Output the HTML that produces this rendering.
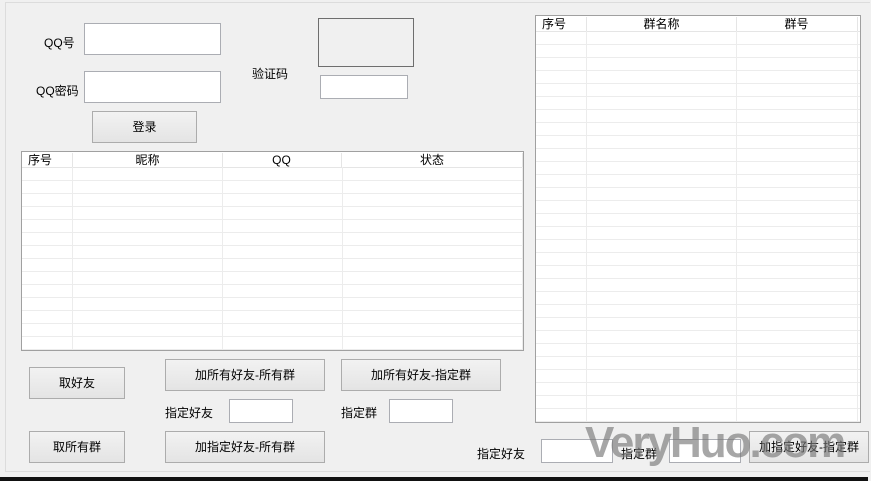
<!DOCTYPE html><html><head><meta charset="utf-8"><style>
body{margin:0;width:871px;height:481px;background:#f0f0f0;position:relative;overflow:hidden;font-family:"Liberation Sans","Noto Sans CJK SC",sans-serif;font-size:12px;color:#000}
.a{position:absolute}
.in{position:absolute;background:#fff;border:1px solid #abadb3;box-sizing:border-box}
.bt{position:absolute;background:linear-gradient(#f2f2f2,#e4e4e4);border:1px solid #acacac;box-sizing:border-box;text-align:center;font-size:12px}
.tb{position:absolute;background:#fff;border:1px solid #a0a0a0;box-sizing:border-box;overflow:hidden;
background-image:linear-gradient(#ececec 1px,transparent 1px);background-size:100% 13px;background-position:0 15px}
.hd{position:absolute;top:0;left:0;right:0;height:15px;background:#fff;border-bottom:1px solid #e5e5e5}
.hc{position:absolute;top:1px;height:15px;line-height:15px;text-align:center;border-right:1px solid #e5e5e5}
.vl{position:absolute;top:15px;bottom:0;width:1px;background:#ececec}
</style></head><body>
<div class="a" style="left:5px;top:2px;width:864px;height:468px;border:1px solid #dcdcdc;border-right:none"></div>
<div class="a" style="left:44px;top:34px">QQ号</div>
<div class="in" style="left:84px;top:23px;width:137px;height:32px"></div>
<div class="a" style="left:36px;top:82px">QQ密码</div>
<div class="in" style="left:84px;top:71px;width:137px;height:32px"></div>
<div class="bt" style="left:92px;top:111px;width:105px;height:32px;line-height:31px">登录</div>
<div class="a" style="left:252px;top:65px">验证码</div>
<div class="a" style="left:318px;top:18px;width:94px;height:47px;border:1px solid #6e6e6e"></div>
<div class="in" style="left:320px;top:75px;width:88px;height:24px"></div>

<div class="tb" style="left:21px;top:151px;width:503px;height:200px">
<div class="hd"><div class="hc" style="left:0;width:49px;text-align:left;padding-left:6px;border-right:none">序号</div>
<div class="hc" style="left:50px;width:149px;border-left:1px solid #e5e5e5">昵称</div>
<div class="hc" style="left:200px;width:119px">QQ</div>
<div class="hc" style="left:320px;width:180px">状态</div></div>
<div class="vl" style="left:50px"></div><div class="vl" style="left:200px"></div><div class="vl" style="left:320px"></div><div class="vl" style="left:500px"></div>
</div>

<div class="tb" style="left:535px;top:15px;width:326px;height:408px">
<div class="hd"><div class="hc" style="left:0;width:44px;text-align:left;padding-left:6px;border-right:none">序号</div>
<div class="hc" style="left:50px;width:149px;border-left:1px solid #e5e5e5">群名称</div>
<div class="hc" style="left:200px;width:121px">群号</div></div>
<div class="vl" style="left:50px"></div><div class="vl" style="left:200px"></div><div class="vl" style="left:321px"></div>
</div>

<div class="bt" style="left:29px;top:367px;width:96px;height:32px;line-height:31px">取好友</div>
<div class="bt" style="left:165px;top:359px;width:160px;height:32px;line-height:31px">加所有好友-所有群</div>
<div class="bt" style="left:341px;top:359px;width:160px;height:32px;line-height:31px">加所有好友-指定群</div>
<div class="a" style="left:165px;top:404px">指定好友</div>
<div class="in" style="left:229px;top:399px;width:64px;height:24px"></div>
<div class="a" style="left:341px;top:404px">指定群</div>
<div class="in" style="left:389px;top:399px;width:64px;height:24px"></div>
<div class="bt" style="left:29px;top:431px;width:96px;height:32px;line-height:31px">取所有群</div>
<div class="bt" style="left:165px;top:431px;width:160px;height:32px;line-height:31px">加指定好友-所有群</div>
<div class="a" style="left:477px;top:445px">指定好友</div>
<div class="in" style="left:541px;top:439px;width:72px;height:24px"></div>
<div class="a" style="left:621px;top:445px">指定群</div>
<div class="in" style="left:669px;top:439px;width:72px;height:24px"></div>
<div class="bt" style="left:749px;top:431px;width:120px;height:32px;line-height:31px">加指定好友-指定群</div>
<div class="a" style="left:585px;top:418px;font-size:44px;font-weight:bold;color:rgba(120,120,120,0.65);letter-spacing:-2px">VeryHuo.com</div>
<div class="a" style="left:0;top:477px;width:868px;height:4px;background:#111"></div>
</body></html>
